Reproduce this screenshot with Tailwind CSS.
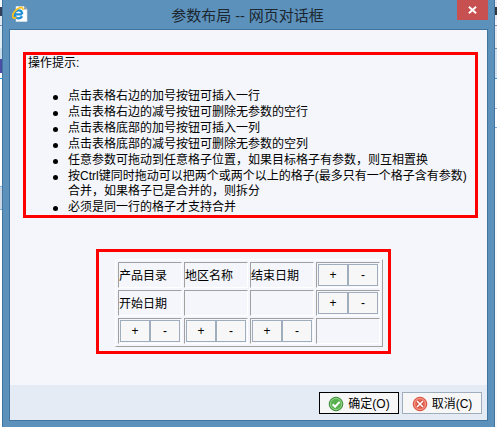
<!DOCTYPE html>
<html lang="zh-CN">

<head>
  <meta charset="UTF-8">
  <meta name="viewport" content="width=device-width, initial-scale=1.0">
  <title>参数布局 -- 网页对话框</title>
  <script src="https://cdn.jsdelivr.net/npm/@tailwindcss/browser@4"></script>
</head>

<body class="flex min-h-screen bg-white font-['Liberation_Sans','Noto_Sans_CJK_SC',sans-serif] text-[12px] text-black">

  <!-- Page behind the dialog, left edge -->
  <div class="flex w-[2px] flex-col bg-[#f4f7fa]">
    <div class="h-[7px]"></div>
    <div class="h-[9px] bg-[#33405c]"></div>
    <div class="h-[9px] bg-[#dfe8f1]"></div>
    <div class="h-px bg-[#7c93ab]"></div>
    <div class="h-[22px] bg-[#e3edf5]"></div>
    <div class="h-[11px] bg-[#c9dcec]"></div>
    <div class="h-[14px] bg-[#4a4fa5]"></div>
    <div class="h-[5px] bg-white"></div>
    <div class="h-px bg-[#2a9df0]"></div>
    <div class="h-[107px] bg-white"></div>
    <div class="h-[24px] border-y border-[#7fb0e0] bg-[#c9d6e6]"></div>
    <div class="flex-1 bg-white"></div>
  </div>

  <!-- Dialog -->
  <div class="flex flex-1 flex-col border-x border-[#41759f] bg-[#5b91bb]">
    <header class="flex h-[29px] items-start pr-[6px] pl-[9px]">
      <svg class="mt-[6px] h-4 w-4" viewBox="0 0 16 16" fill="none">
        <path d="M4 .5h8l3 3v12H4z" fill="#fff" stroke="#e3e3e3" stroke-width=".6" />
        <path d="M12 .5v3h3z" fill="#8f979e" />
        <path d="M10 8.300H3M10.200 8.300C10.200 5.600 8.700 4.300 6.500 4.300S2.600 5.900 2.600 8.300 4.200 12.300 6.500 12.300c1.700 0 2.900-.8 3.500-2.100" stroke="#1f8fd6" stroke-width="2.300" />
        <path d="M10.700 3.800C11.200 1.600 9.500 1 7.200 2 3.800 3.500.7 7.200.6 9.900c0 2.400 1.600 2.700 3.700 1.500" stroke="#fcc21c" stroke-width="1.800" />
      </svg>
      <h1 class="flex-1 pl-[10px] text-center font-['Open_Sans','Noto_Sans_CJK_SC',sans-serif] text-[15px] leading-[30px] text-[#1c2730]">参数布局 -- 网页对话框</h1>
      <button type="button" aria-label="关闭" class="flex h-5 w-[31px] items-center justify-center bg-[#c75050]">
        <svg class="h-2 w-[9px]" viewBox="0 0 9 8">
          <path d="M.9.7l7.200 6.600M8.100.7L.9 7.300" stroke="#fff" stroke-width="1.900" />
        </svg>
      </button>
    </header>

    <main class="mx-[6px] mb-[6px] flex flex-1 flex-col border border-[#41759f] bg-[#f4f6fb]">
      <div class="flex flex-1 flex-col pt-[22px] pr-[9px] pl-[13px]">
        <section class="border-[3px] border-[#ff0000] pt-px pl-[2px] leading-[15px]">
          <p>操作提示:</p>
          <ul class="mt-[18px] flex flex-col gap-px pl-[25px] [&_li]:flex [&_li]:before:mt-[6px] [&_li]:before:mr-[10px] [&_li]:before:size-[5px] [&_li]:before:shrink-0 [&_li]:before:rounded-full [&_li]:before:bg-black">
            <li>点击表格右边的加号按钮可插入一行</li>
            <li>点击表格右边的减号按钮可删除无参数的空行</li>
            <li>点击表格底部的加号按钮可插入一列</li>
            <li>点击表格底部的减号按钮可删除无参数的空列</li>
            <li>任意参数可拖动到任意格子位置，如果目标格子有参数，则互相置换</li>
            <li>按Ctrl键同时拖动可以把两个或两个以上的格子(最多只有一个格子含有参数)合并，如果格子已是合并的，则拆分</li>
            <li>必须是同一行的格子才支持合并</li>
          </ul>
        </section>

        <section class="mt-[31px] mr-[14px] self-center border-[3px] border-[#ff0000] pt-[7px] pr-[5px] pb-1 pl-4">
          <table class="w-[268px] table-fixed border-separate border-spacing-[2px] border border-t-white border-r-[#a0a0a0] border-b-[#a0a0a0] border-l-white">
            <tbody class="[&_td]:h-[26px] [&_td]:border [&_td]:border-t-[#a0a0a0] [&_td]:border-r-white [&_td]:border-b-white [&_td]:border-l-[#a0a0a0] [&_button]:h-[22px] [&_button]:flex-1 [&_button]:border [&_button]:border-[#a0adbc] [&_button]:bg-[#f7f7f7]">
              <tr>
                <td class="pt-[2px]">产品目录</td>
                <td class="pt-[2px]">地区名称</td>
                <td class="pt-[2px]">结束日期</td>
                <td class="p-px"><div class="flex"><button type="button">+</button><button type="button">-</button></div></td>
              </tr>
              <tr>
                <td class="pt-[2px]">开始日期</td>
                <td></td>
                <td></td>
                <td class="p-px"><div class="flex"><button type="button">+</button><button type="button">-</button></div></td>
              </tr>
              <tr>
                <td class="p-px"><div class="flex"><button type="button">+</button><button type="button">-</button></div></td>
                <td class="p-px"><div class="flex"><button type="button">+</button><button type="button">-</button></div></td>
                <td class="p-px"><div class="flex"><button type="button">+</button><button type="button">-</button></div></td>
                <td></td>
              </tr>
            </tbody>
          </table>
        </section>
      </div>

      <footer class="flex justify-end gap-[3px] bg-[#e4ebf5] pt-[7px] pr-[5px] pb-[6px]">
        <button type="button" class="flex h-[22px] w-20 items-center justify-center gap-1 border border-black bg-[#f7f7f7] pt-px">
          <svg class="h-4 w-4" viewBox="0 0 16 16" fill="none">
            <circle cx="8" cy="8" r="6.800" fill="#56b04c" stroke="#3d8f3a" />
            <circle cx="8" cy="8" r="5.600" stroke="#a5d99b" stroke-width=".8" />
            <path d="M4.600 8.200l2.500 2.500 4.500-4.800" stroke="#fff" stroke-width="2" />
          </svg>
          确定(O)
        </button>
        <button type="button" class="flex h-[22px] w-20 items-center justify-center gap-1 border border-[#a0adbc] bg-[#f7f7f7] pt-px">
          <svg class="h-4 w-4" viewBox="0 0 16 16" fill="none">
            <circle cx="8" cy="8" r="6.800" fill="#ee6a58" stroke="#d5503f" />
            <circle cx="8" cy="8" r="5.600" stroke="#f7a597" stroke-width=".8" />
            <path d="M5 5l6 6M11 5l-6 6" stroke="#b93f30" stroke-width="3" />
            <path d="M5 5l6 6M11 5l-6 6" stroke="#fff" stroke-width="1.600" />
          </svg>
          取消(C)
        </button>
      </footer>
    </main>
  </div>

  <!-- Page behind the dialog, right edge -->
  <div class="flex w-[2px] flex-col bg-white">
    <div class="h-[7px] bg-[#e6eaef]"></div>
    <div class="h-[8px] bg-[#33383f]"></div>
    <div class="h-[5px] bg-[#e6eaef]"></div>
    <div class="h-[6px] border-b border-[#7c93ab] bg-[#f4f7fa]"></div>
    <div class="h-[23px] border-b border-[#7c93ab] bg-[#ececf0]"></div>
    <div class="h-[29px] bg-[#d2e2f1]"></div>
    <div class="h-px bg-[#2a9df0]"></div>
    <div class="h-[30px] border-b border-[#9db9d4] bg-[#f7f8fa]"></div>
    <div class="h-[19px] border-b border-[#7fa6cc] bg-white"></div>
    <div class="flex-1 bg-[#f7f8fa]"></div>
  </div>

</body>

</html>
